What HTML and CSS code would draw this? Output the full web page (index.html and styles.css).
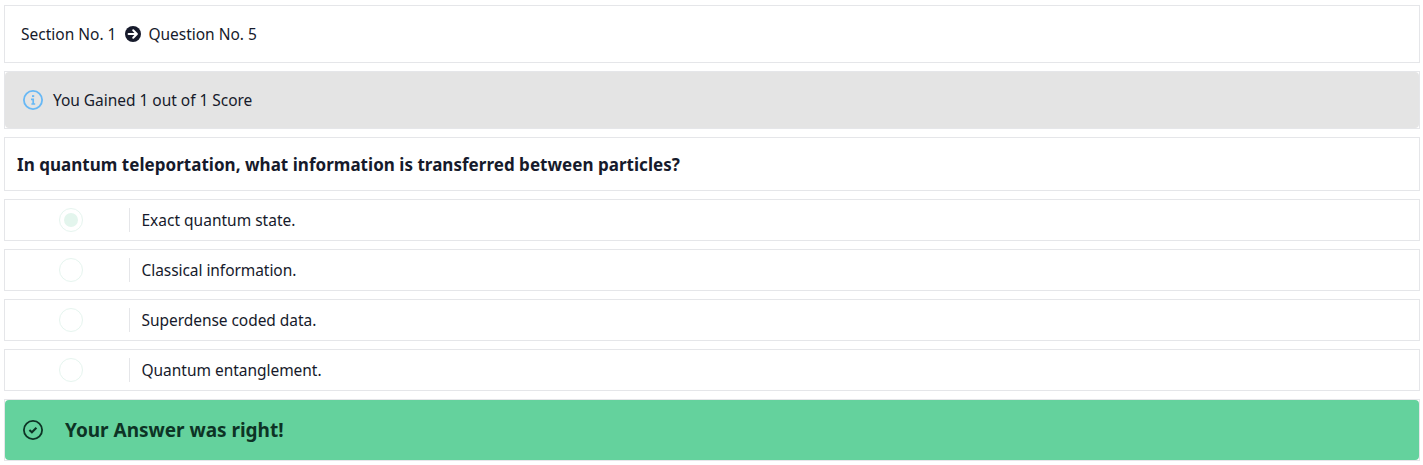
FILE: index.html
```
<!DOCTYPE html>
<html lang="en">
<head>
<meta charset="utf-8">
<title>Question review</title>
<link rel="stylesheet" href="styles.css">
</head>
<body>
<main class="review">
  <nav class="card trail">
    <span class="trail-section">Section No. 1</span>
    <svg class="trail-icon" viewBox="0 0 16 16"><circle cx="8" cy="8" r="8" fill="#161a2b"/><path d="M3.6 8h8M8.2 4.3 11.9 8l-3.7 3.7" fill="none" stroke="#fff" stroke-width="2" stroke-linecap="round" stroke-linejoin="round"/></svg>
    <span class="trail-question">Question No. 5</span>
  </nav>
  <div class="card"><div class="alert score">
    <svg class="alert-icon" viewBox="0 0 20 20" fill="none" stroke="#67b8f5"><circle cx="10" cy="10" r="9.1" stroke-width="1.8"/><path d="M8 9.3h2.2v4.5M8.4 14h3.8" stroke-width="1.7"/><path d="M9 6.1h2.2" stroke-width="1.9"/></svg>
    <span class="score-text">You Gained 1 out of 1 Score</span>
  </div></div>
  <h1 class="card question"><span class="question-text">In quantum teleportation, what information is transferred between particles?</span></h1>
  <div class="card option"><div class="pick"><span class="radio checked"></span></div><span class="label label-a">Exact quantum state.</span></div>
  <div class="card option"><div class="pick"><span class="radio"></span></div><span class="label label-b">Classical information.</span></div>
  <div class="card option"><div class="pick"><span class="radio"></span></div><span class="label label-c">Superdense coded data.</span></div>
  <div class="card option"><div class="pick"><span class="radio"></span></div><span class="label label-d">Quantum entanglement.</span></div>
  <div class="card"><div class="alert result">
    <svg class="alert-icon" viewBox="0 0 20 20" fill="none" stroke="#0d3325"><circle cx="10" cy="10" r="9.1" stroke-width="1.8"/><path d="m6.4 9.9 2.5 2.3 4.5-4.5" stroke-width="2.1"/></svg>
    <span class="result-text">Your Answer was right!</span>
  </div></div>
</main>
</body>
</html>
```
FILE: styles.css
```
* { box-sizing: border-box; }
body {
  margin: 0;
  background: #fff;
  color: #161a2b;
  font: 15.5px/24px "Noto Sans", "Open Sans", sans-serif;
  white-space: nowrap;
}
.review {
  display: flex;
  flex-direction: column;
  gap: 8px;
  padding: 5px 3px 4px 4px;
}
.card { border: 1px solid #e5e6e9; }
.trail {
  display: flex;
  align-items: center;
  height: 58px;
  padding-left: 16px;
}
.trail-section { width: 95px; }
.trail-icon { width: 16px; height: 16px; margin: 0 8px 0 8.5px; }
.trail-question { letter-spacing: -0.03px; }
.alert {
  display: flex;
  align-items: center;
  padding-left: 18px;
}
.alert-icon { width: 20px; height: 20px; flex: none; }
.score { height: 56px; gap: 10px; background: #e4e4e4; border-radius: 4px; }
.score-text { letter-spacing: -0.03px; }
.question {
  display: flex;
  align-items: center;
  height: 54px;
  margin: 0;
  padding: 2px 0 0 12px;
  font-size: 17px;
  font-weight: 700;
}
.question-text { letter-spacing: 0.03px; }
.option { display: flex; align-items: center; height: 42px; }
.pick {
  display: flex;
  align-items: center;
  width: 125px;
  height: 24px;
  padding-left: 54px;
  border-right: 1px solid #e5e6e9;
}
.radio {
  display: grid;
  place-items: center;
  width: 24px;
  height: 24px;
  border: 1px solid #e6f5ef;
  border-radius: 50%;
}
.radio.checked::after {
  content: "";
  width: 14px;
  height: 14px;
  border-radius: 50%;
  background: #e3f5ed;
}
.label { margin-left: 11.5px; }
.label-b { letter-spacing: -0.06px; }
.label-c { letter-spacing: -0.05px; }
.label-d { letter-spacing: -0.03px; }
.result { height: 60px; gap: 22px; background: #64d29d; border-radius: 4px; }
.result-text { color: #0d3325; font-size: 19px; font-weight: 700; letter-spacing: -0.02px; }
```
